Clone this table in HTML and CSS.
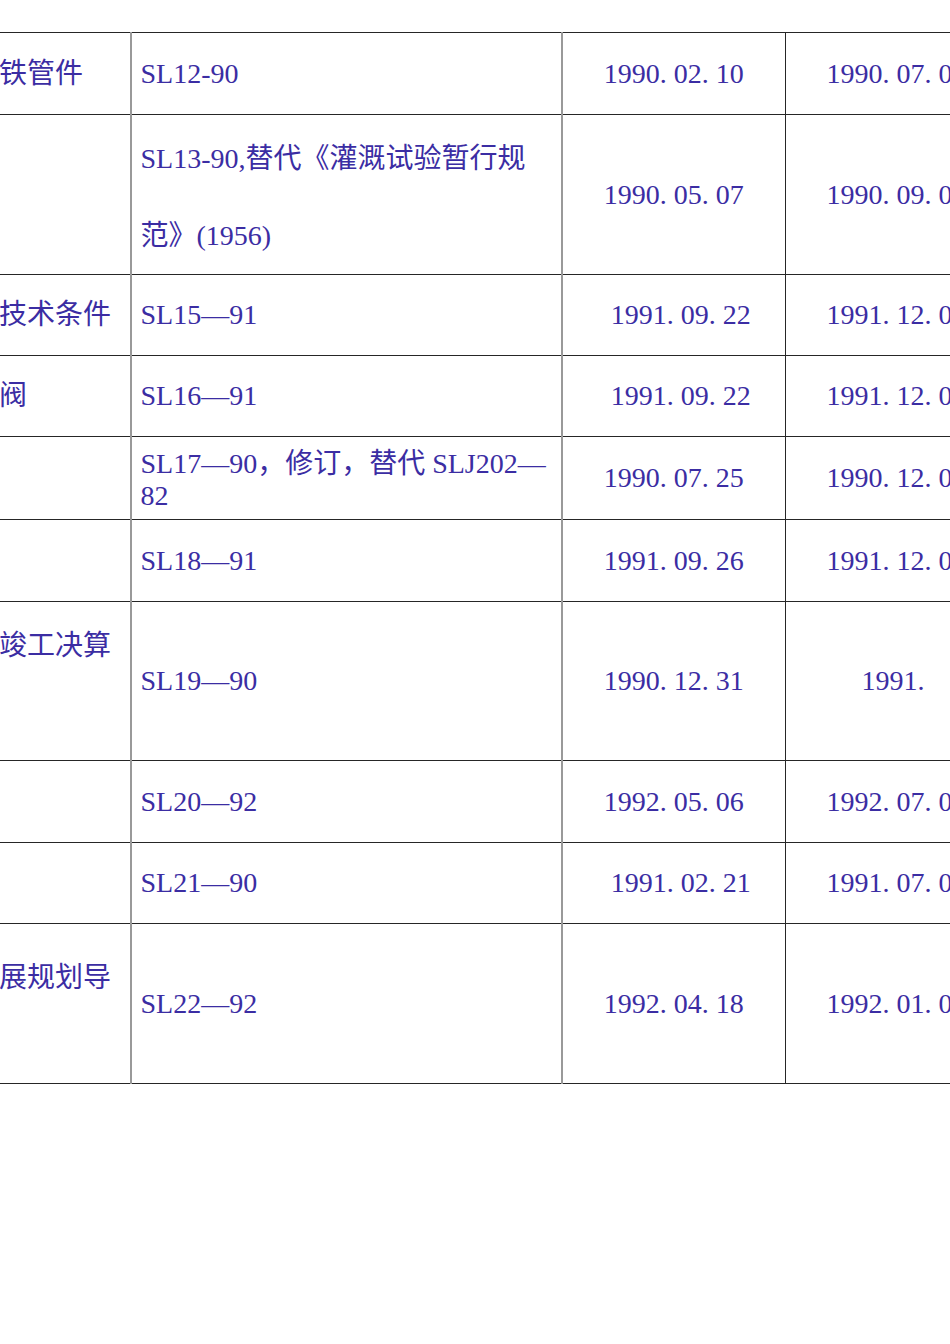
FILE: index.html
```html
<!DOCTYPE html>
<html lang="zh-CN">
<head>
<meta charset="utf-8">
<title>水利标准</title>
<link rel="stylesheet" href="styles.css">
</head>
<body>
<div class="page">
  <table class="std">
    <colgroup>
      <col class="w1"><col class="w2"><col class="w3"><col class="w4">
    </colgroup>
    <tbody>
      <tr class="h82">
        <td class="c1">铁管件</td>
        <td class="c2">SL12-90</td>
        <td class="c3"><span class="d">1990<i>.</i>02<i>.</i>10</span></td>
        <td class="c4"><span class="d">1990<i>.</i>07<i>.</i>01</span></td>
      </tr>
      <tr class="h160">
        <td class="c1"></td>
        <td class="c2 tall">SL13-90,替代《灌溉试验暂行规<br>范》(1956)</td>
        <td class="c3"><span class="d">1990<i>.</i>05<i>.</i>07</span></td>
        <td class="c4"><span class="d">1990<i>.</i>09<i>.</i>01</span></td>
      </tr>
      <tr class="h81">
        <td class="c1">技术条件</td>
        <td class="c2">SL15—91</td>
        <td class="c3"><span class="d shift">1991<i>.</i>09<i>.</i>22</span></td>
        <td class="c4"><span class="d">1991<i>.</i>12<i>.</i>01</span></td>
      </tr>
      <tr class="h81">
        <td class="c1">阀</td>
        <td class="c2">SL16—91</td>
        <td class="c3"><span class="d shift">1991<i>.</i>09<i>.</i>22</span></td>
        <td class="c4"><span class="d">1991<i>.</i>12<i>.</i>01</span></td>
      </tr>
      <tr class="h83">
        <td class="c1"></td>
        <td class="c2 tight">SL17—90，修订，替代 SLJ202—<br>82</td>
        <td class="c3"><span class="d">1990<i>.</i>07<i>.</i>25</span></td>
        <td class="c4"><span class="d">1990<i>.</i>12<i>.</i>01</span></td>
      </tr>
      <tr class="h82">
        <td class="c1"></td>
        <td class="c2">SL18—91</td>
        <td class="c3"><span class="d">1991<i>.</i>09<i>.</i>26</span></td>
        <td class="c4"><span class="d">1991<i>.</i>12<i>.</i>01</span></td>
      </tr>
      <tr class="h159">
        <td class="c1 top27">竣工决算</td>
        <td class="c2">SL19—90</td>
        <td class="c3"><span class="d">1990<i>.</i>12<i>.</i>31</span></td>
        <td class="c4"><span class="d">1991<i>.</i></span></td>
      </tr>
      <tr class="h82">
        <td class="c1"></td>
        <td class="c2">SL20—92</td>
        <td class="c3"><span class="d">1992<i>.</i>05<i>.</i>06</span></td>
        <td class="c4"><span class="d">1992<i>.</i>07<i>.</i>01</span></td>
      </tr>
      <tr class="h81">
        <td class="c1"></td>
        <td class="c2">SL21—90</td>
        <td class="c3"><span class="d shift">1991<i>.</i>02<i>.</i>21</span></td>
        <td class="c4"><span class="d">1991<i>.</i>07<i>.</i>01</span></td>
      </tr>
      <tr class="h160">
        <td class="c1 top37">展规划导</td>
        <td class="c2">SL22—92</td>
        <td class="c3"><span class="d">1992<i>.</i>04<i>.</i>18</span></td>
        <td class="c4"><span class="d">1992<i>.</i>01<i>.</i>01</span></td>
      </tr>
    </tbody>
  </table>
</div>
</body>
</html>
```

FILE: styles.css
```css
html, body {
  margin: 0;
  padding: 0;
  background: #ffffff;
}

.page {
  width: 950px;
  height: 1344px;
  overflow: hidden;
  padding-top: 32px;
  box-sizing: border-box;
}

.std {
  border-collapse: collapse;
  table-layout: fixed;
  width: 1028px;
  margin-left: -21px;
  font-family: "Liberation Serif", "Noto Sans CJK SC", serif;
  font-size: 28px;
  line-height: 1.2;
  color: #3b2da3;
}

.w1 { width: 151px; }
.w2 { width: 431px; }
.w3 { width: 224px; }
.w4 { width: 222px; }

.std td {
  border-top: 1px solid #262626;
  border-bottom: 1px solid #262626;
  padding: 0 10px;
  vertical-align: middle;
  white-space: nowrap;
  overflow: hidden;
  box-sizing: border-box;
}

.std td.c1 {
  padding-left: 19px;
  border-left: 1px solid #262626;
  border-right: 2px solid #999999;
}

.std td.c2 {
  padding-left: 9px;
  border-right: 2px solid #999999;
}

.std td.c3 {
  text-align: center;
  padding: 0;
  border-right: 1px solid #262626;
}

.std td.c4 {
  text-align: center;
  padding: 0;
  border-right: 1px solid #262626;
}

.std td.tall {
  line-height: 77px;
  padding-top: 4px;
}

.std td.tight {
  line-height: 32px;
  padding-top: 4px;
}

.std td.top27 {
  vertical-align: top;
  padding-top: 27px;
}

.std td.top37 {
  vertical-align: top;
  padding-top: 37px;
}

.h82 td { height: 82px; }
.h81 td { height: 81px; }
.h83 td { height: 83px; }
.h159 td { height: 159px; }
.h160 td { height: 160px; }

.d i {
  font-style: normal;
  padding-right: 7px;
}

.d.shift {
  padding-left: 14px;
}
```
